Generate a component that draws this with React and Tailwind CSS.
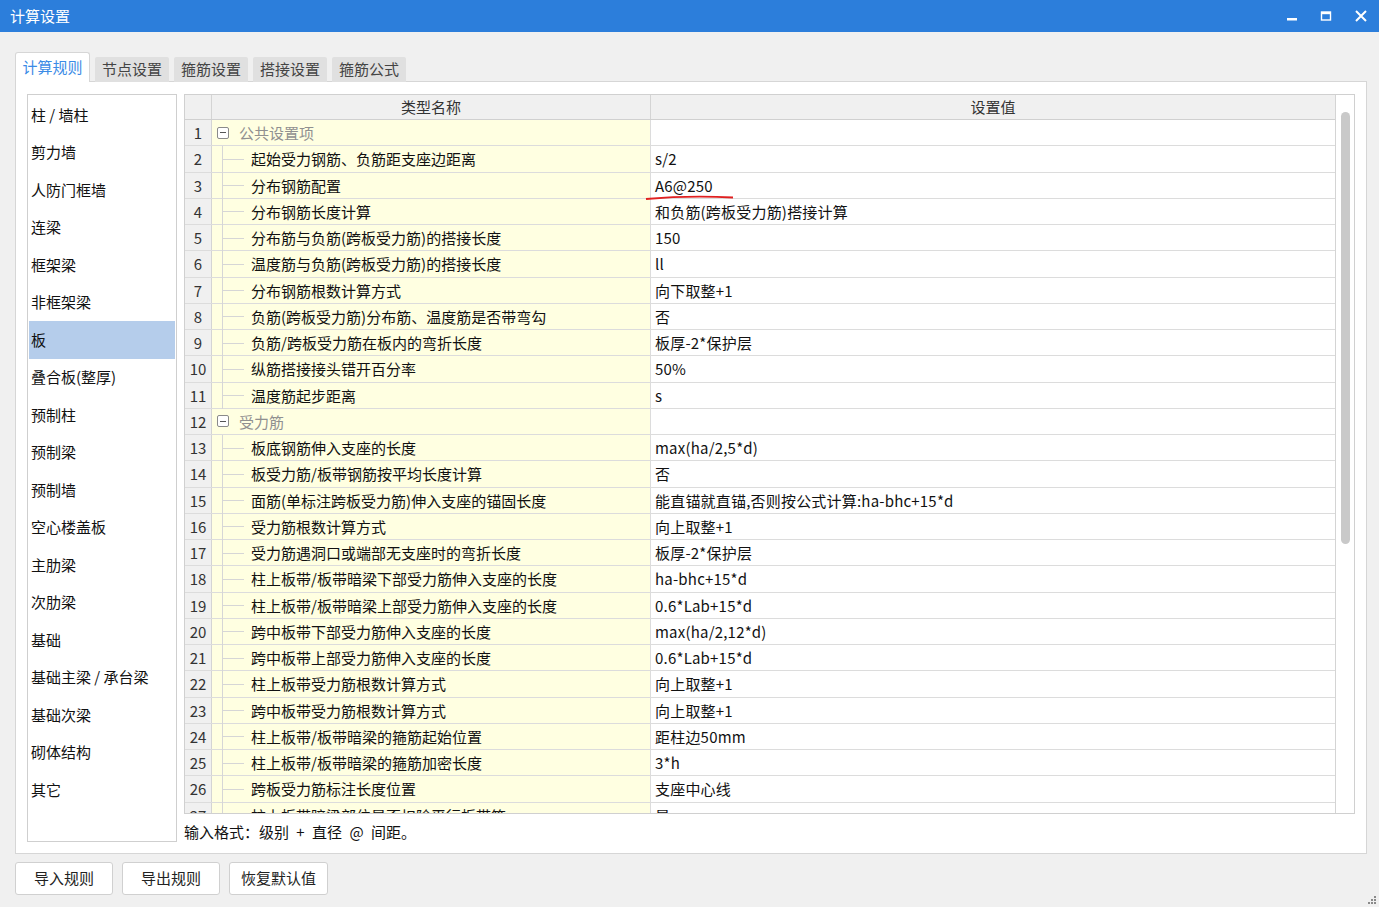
import React from "react";

const FONT = { fontFamily: '"Noto Sans CJK SC", "Noto Sans", sans-serif' };

const leftItems = [
  "柱 / 墙柱", "剪力墙", "人防门框墙", "连梁", "框架梁", "非框架梁", "板", "叠合板(整厚)",
  "预制柱", "预制梁", "预制墙", "空心楼盖板", "主肋梁", "次肋梁", "基础",
  "基础主梁 / 承台梁", "基础次梁", "砌体结构", "其它",
];

const rows = [
  { g: true, n: "公共设置项", v: "" },
  { n: "起始受力钢筋、负筋距支座边距离", v: "s/2" },
  { n: "分布钢筋配置", v: "A6@250" },
  { n: "分布钢筋长度计算", v: "和负筋(跨板受力筋)搭接计算" },
  { n: "分布筋与负筋(跨板受力筋)的搭接长度", v: "150" },
  { n: "温度筋与负筋(跨板受力筋)的搭接长度", v: "ll" },
  { n: "分布钢筋根数计算方式", v: "向下取整+1" },
  { n: "负筋(跨板受力筋)分布筋、温度筋是否带弯勾", v: "否" },
  { n: "负筋/跨板受力筋在板内的弯折长度", v: "板厚-2*保护层" },
  { n: "纵筋搭接接头错开百分率", v: "50%" },
  { n: "温度筋起步距离", v: "s" },
  { g: true, n: "受力筋", v: "" },
  { n: "板底钢筋伸入支座的长度", v: "max(ha/2,5*d)" },
  { n: "板受力筋/板带钢筋按平均长度计算", v: "否" },
  { n: "面筋(单标注跨板受力筋)伸入支座的锚固长度", v: "能直锚就直锚,否则按公式计算:ha-bhc+15*d" },
  { n: "受力筋根数计算方式", v: "向上取整+1" },
  { n: "受力筋遇洞口或端部无支座时的弯折长度", v: "板厚-2*保护层" },
  { n: "柱上板带/板带暗梁下部受力筋伸入支座的长度", v: "ha-bhc+15*d" },
  { n: "柱上板带/板带暗梁上部受力筋伸入支座的长度", v: "0.6*Lab+15*d" },
  { n: "跨中板带下部受力筋伸入支座的长度", v: "max(ha/2,12*d)" },
  { n: "跨中板带上部受力筋伸入支座的长度", v: "0.6*Lab+15*d" },
  { n: "柱上板带受力筋根数计算方式", v: "向上取整+1" },
  { n: "跨中板带受力筋根数计算方式", v: "向上取整+1" },
  { n: "柱上板带/板带暗梁的箍筋起始位置", v: "距柱边50mm" },
  { n: "柱上板带/板带暗梁的箍筋加密长度", v: "3*h" },
  { n: "跨板受力筋标注长度位置", v: "支座中心线" },
  { n: "柱上板带暗梁部位是否扣除平行板带筋", v: "是" },
];

function MinusBox() {
  return (
    <span className="relative w-[12px] h-[12px] border border-[#8a8a8a] rounded-[2px] bg-white flex items-center justify-center shrink-0">
      <span className="w-[6px] h-[1.5px] bg-[#555]" />
    </span>
  );
}

function Row({ r, i }) {
  return (
    <div className="flex h-[26.25px] shrink-0 border-b border-[#dcdcdc] text-[15px] leading-none">
      <div className="w-[27px] shrink-0 bg-[#f0f0f0] border-r border-[#d4d4d4] flex items-center justify-center text-[#333]">
        {i + 1}
      </div>
      <div className="w-[439px] shrink-0 bg-[#ffffe1] border-r border-[#dcdcdc] flex items-center relative">
        {r.g ? (
          <div className="flex items-center pl-[5px]">
            <MinusBox />
            <span className="ml-[10px] text-[#909090]">{r.n}</span>
          </div>
        ) : (
          <>
            <span className="absolute left-[10px] top-0 bottom-[-1px] w-px bg-[#d6d6d6]" />
            <span className="absolute left-[10px] top-1/2 w-[22px] h-px bg-[#d6d6d6]" />
            <span className="pl-[39px] text-[#111] whitespace-nowrap">{r.n}</span>
          </>
        )}
      </div>
      <div className="flex-1 bg-white flex items-center pl-[4px] text-[#111] whitespace-nowrap tracking-[0.2px]">
        {r.v}
      </div>
    </div>
  );
}

export default function App() {
  return (
    <div className="w-[1379px] h-[907px] bg-[#f0f0f0] flex flex-col relative overflow-hidden" style={FONT}>
      {/* Title bar */}
      <div className="h-[32px] bg-[#2c7edb] flex items-center pl-[10px] pr-[10px] text-white text-[15px] shrink-0">
        <span>计算设置</span>
        <div className="ml-auto flex items-center">
          <svg width="14" height="14" viewBox="0 0 14 14" className="mr-[20px] mt-[2px]">
            <rect x="2" y="8" width="10" height="2.5" fill="white" />
          </svg>
          <svg width="14" height="14" viewBox="0 0 14 14" className="mr-[21px]">
            <rect x="2.5" y="3" width="9" height="8" fill="none" stroke="white" strokeWidth="1.4" />
            <rect x="2.5" y="3" width="9" height="2.2" fill="white" />
          </svg>
          <svg width="14" height="14" viewBox="0 0 14 14" className="mr-[1px]">
            <path d="M2 2 L12 12 M12 2 L2 12" stroke="white" strokeWidth="2" />
          </svg>
        </div>
      </div>

      {/* Tabs */}
      <div className="flex items-end gap-[5px] pl-[15px] mt-[20px] h-[30px] shrink-0 relative z-10 text-[15px]">
        <div className="w-[75px] h-[30px] bg-white border border-[#d6d6d6] border-b-0 rounded-t-[3px] flex items-center justify-center text-[#3b8be6]">
          计算规则
        </div>
        {["节点设置", "箍筋设置", "搭接设置", "箍筋公式"].map((t) => (
          <div key={t} className="w-[74px] h-[25px] bg-[#e0e0e0] rounded-t-[2px] flex items-center justify-center text-[#444]">
            {t}
          </div>
        ))}
      </div>

      {/* Panel */}
      <div className="ml-[15px] w-[1352px] h-[773px] -mt-px bg-white border border-[#d6d6d6] flex pl-[11px] pt-[12px] shrink-0">
        {/* Left list */}
        <div className="w-[150px] h-[748px] border border-[#cfcfcf] p-px flex flex-col shrink-0">
          {leftItems.map((t) => (
            <div
              key={t}
              className={
                "h-[37.5px] shrink-0 flex items-center pl-[2px] text-[15px] text-[#111] " +
                (t === "板" ? "bg-[#b5cdeb]" : "")
              }
            >
              {t}
            </div>
          ))}
        </div>

        <div className="ml-[7px] flex flex-col">
          {/* Table */}
          <div className="w-[1171px] h-[720px] border border-[#d0d0d0] flex relative overflow-hidden">
            <div className="w-[1150px] flex flex-col overflow-hidden">
              <div className="flex h-[25px] shrink-0 bg-[#f0f0f0] border-b border-[#d0d0d0] text-[15px] text-[#333]">
                <div className="w-[27px] shrink-0 border-r border-[#d4d4d4]" />
                <div className="w-[439px] shrink-0 border-r border-[#d4d4d4] flex items-center justify-center">类型名称</div>
                <div className="flex-1 flex items-center justify-center">设置值</div>
              </div>
              {rows.map((r, i) => (
                <Row key={i} r={r} i={i} />
              ))}
            </div>
            <div className="w-[19px] border-l border-[#d4d4d4] bg-white flex justify-center pt-[17px] shrink-0">
              <div className="w-[9px] h-[432px] bg-[#c9c9c9] rounded-full" />
            </div>
            <svg className="absolute left-[460px] top-[99px]" width="92" height="8" viewBox="0 0 92 8">
              <path d="M1 5 Q 45 1 88 3.5" stroke="#e02020" strokeWidth="1.8" fill="none" />
            </svg>
          </div>
          <div className="h-[36px] flex items-center text-[15px] text-[#111] whitespace-pre [word-spacing:4px]">
            输入格式：级别 + 直径 @ 间距。
          </div>
        </div>
      </div>

      {/* Buttons */}
      <div className="flex gap-[9px] pl-[15px] mt-[8px] text-[15px] text-[#222]">
        <button className="w-[98px] h-[33px] bg-white border border-[#d0d0d0] rounded-[3px]">导入规则</button>
        <button className="w-[98px] h-[33px] bg-white border border-[#d0d0d0] rounded-[3px]">导出规则</button>
        <button className="w-[99px] h-[33px] bg-white border border-[#d0d0d0] rounded-[3px]">恢复默认值</button>
      </div>

      {/* Resize grip */}
      <svg className="absolute right-[2px] bottom-[2px]" width="10" height="10" viewBox="0 0 10 10">
        <g fill="#8a8a8a">
          <rect x="7" y="1" width="2" height="2" />
          <rect x="4" y="4" width="2" height="2" />
          <rect x="7" y="4" width="2" height="2" />
          <rect x="1" y="7" width="2" height="2" />
          <rect x="4" y="7" width="2" height="2" />
          <rect x="7" y="7" width="2" height="2" />
        </g>
      </svg>
    </div>
  );
}
